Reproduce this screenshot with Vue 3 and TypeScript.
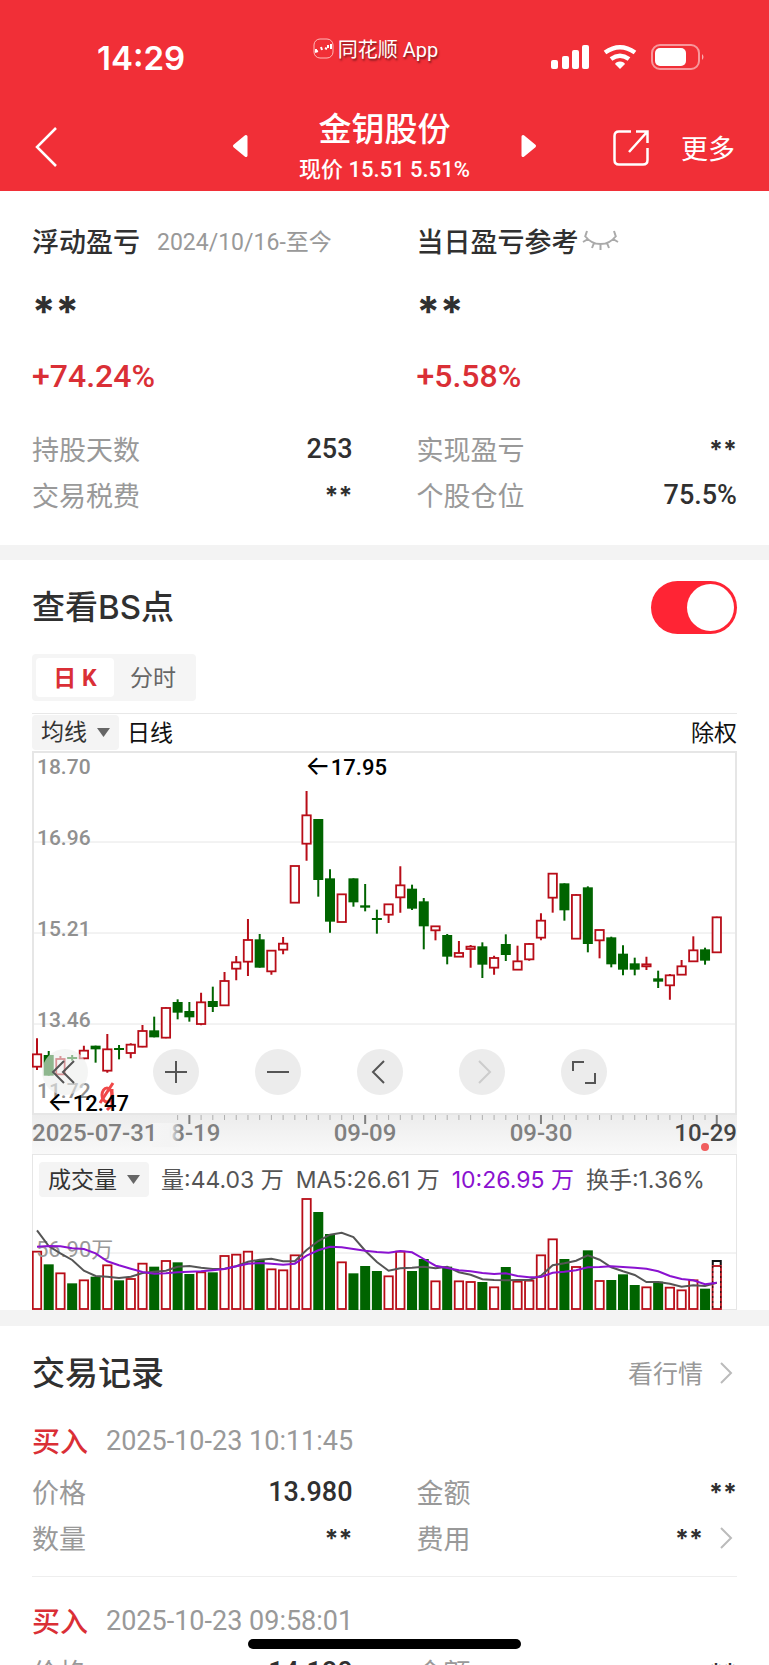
<script setup lang="ts">
import { computed, ref } from 'vue'

type Kind = 'r' | 'g'
type Candle = [Kind, number, number, number, number]

interface Field {
  label: string
  value: string
  masked?: boolean
  more?: boolean
}

interface Trade {
  side: string
  time: string
  fields: Field[]
}

const showPoints = ref(true)
const period = ref('day')

const leftStats: Field[] = [
  { label: '持股天数', value: '253' },
  { label: '交易税费', value: '**', masked: true },
]
const rightStats: Field[] = [
  { label: '实现盈亏', value: '**', masked: true },
  { label: '个股仓位', value: '75.5%' },
]

const trades: Trade[] = [
  {
    side: '买入',
    time: '2025-10-23 10:11:45',
    fields: [
      { label: '价格', value: '13.980' },
      { label: '金额', value: '**', masked: true },
      { label: '数量', value: '**', masked: true },
      { label: '费用', value: '**', masked: true, more: true },
    ],
  },
  {
    side: '买入',
    time: '2025-10-23 09:58:01',
    fields: [
      { label: '价格', value: '14.180' },
      { label: '金额', value: '**', masked: true },
      { label: '数量', value: '**', masked: true },
      { label: '费用', value: '**', masked: true, more: true },
    ],
  },
]

/* kind, high, body top, body bottom, low; depth below the panel top in thirds of a unit */
const candles: Candle[] = [
  ['r', 895, 943, 980, 990], ['g', 933, 945, 1007, 1007], ['r', 948, 957, 1003, 1003], ['g', 945, 951, 957, 962],
  ['r', 917, 932, 955, 958], ['g', 917, 917, 928, 968], ['r', 882, 928, 992, 998], ['g', 915, 924, 930, 958],
  ['r', 910, 914, 939, 955], ['r', 855, 873, 920, 922], ['g', 830, 871, 892, 892], ['r', 802, 804, 893, 895],
  ['g', 778, 786, 818, 838], ['g', 786, 813, 832, 845], ['r', 758, 787, 852, 856], ['g', 740, 783, 801, 816],
  ['r', 696, 723, 796, 796], ['r', 648, 667, 686, 721], ['r', 537, 600, 665, 708], ['g', 582, 598, 683, 683],
  ['r', 630, 632, 694, 704], ['r', 591, 611, 629, 643], ['r', 378, 378, 488, 488], ['r', 153, 226, 311, 362],
  ['g', 237, 237, 420, 470], ['g', 388, 415, 545, 578], ['r', 463, 463, 546, 546], ['g', 415, 415, 487, 500],
  ['g', 432, 496, 503, 514], ['g', 509, 534, 540, 581], ['r', 493, 493, 524, 549], ['r', 379, 436, 472, 518],
  ['g', 434, 446, 506, 510], ['g', 474, 484, 559, 628], ['r', 559, 559, 571, 601], ['g', 582, 585, 650, 673],
  ['r', 603, 639, 650, 650], ['r', 615, 620, 627, 683], ['g', 607, 619, 674, 714], ['r', 647, 654, 683, 704],
  ['g', 583, 612, 645, 663], ['r', 617, 664, 689, 689], ['r', 609, 612, 658, 662], ['r', 520, 542, 593, 601],
  ['r', 401, 401, 473, 518], ['g', 430, 430, 511, 542], ['r', 463, 465, 596, 597], ['g', 439, 442, 612, 637],
  ['r', 570, 570, 601, 655], ['g', 590, 592, 673, 682], ['g', 616, 641, 689, 706], ['g', 653, 670, 689, 706],
  ['r', 650, 673, 679, 690], ['g', 692, 715, 725, 744], ['r', 702, 706, 736, 779], ['r', 660, 679, 704, 704],
  ['r', 589, 631, 664, 664], ['g', 623, 628, 662, 674], ['r', 530, 532, 637, 637],
]

const volumeTops = [
  425, 463, 490, 520, 511, 500, 466, 511, 507, 461, 470, 453, 457, 492, 487, 487, 438, 434, 425, 450,
  478, 481, 436, 267, 306, 372, 457, 490, 468, 483, 499, 425, 483, 447, 514, 470, 514, 516, 516, 532,
  471, 515, 512, 436, 388, 447, 471, 421, 513, 510, 493, 525, 532, 515, 533, 541, 511, 536, 468,
]
const ma5 = [
  361, 408, 430, 450, 482, 498, 500, 504, 500, 489, 485, 482, 470, 468, 473, 477, 476, 469, 455, 449,
  446, 454, 454, 420, 393, 374, 368, 381, 422, 456, 482, 475, 473, 470, 475, 470, 487, 494, 508, 510,
  511, 510, 510, 497, 466, 460, 452, 436, 449, 472, 484, 495, 516, 516, 521, 530, 526, 528, 518,
]
const ma10 = [
  410, 408, 409, 415, 417, 430, 454, 466, 476, 486, 491, 490, 487, 485, 484, 481, 477, 469, 461, 459,
  461, 464, 461, 437, 421, 410, 412, 417, 422, 426, 428, 423, 427, 447, 467, 474, 481, 484, 489, 492,
  490, 498, 502, 501, 488, 485, 481, 472, 471, 469, 471, 473, 476, 484, 498, 507, 511, 523, 518,
]

const PRICE_TOP = 11
const VOLUME_TOP = 88
const VOLUME_FLOOR = 111
const xAt = (i: number): number => 5 + i * 11.72
const priceY = (v: number): number => v / 3 - PRICE_TOP
const volumeY = (v: number): number => v / 3 - VOLUME_TOP

const bars = computed(() =>
  candles.map(([kind, high, top, bottom, low], i) => ({
    kind,
    x: xAt(i),
    high: priceY(high),
    top: priceY(top),
    bottom: priceY(bottom),
    low: priceY(low),
    volume: volumeY(volumeTops[i]),
    last: i === candles.length - 1,
  })),
)

const linePoints = (values: number[]): string =>
  values.map((v, i) => `${xAt(i).toFixed(1)},${volumeY(v).toFixed(1)}`).join(' ')

const majorTicks = [13, 28, 43, 58]
const ticks = candles.map((_, i) => i).filter((i) => i > 11)

const priceLabels = [
  { text: '18.70', y: 23 },
  { text: '16.96', y: 94 },
  { text: '15.21', y: 185 },
  { text: '13.46', y: 276 },
  { text: '11.72', y: 347 },
]
const gridLines = [91, 182, 273]
</script>

<template>
  <div class="page">
    <header class="top">
      <div class="status">
        <span class="clock">14:29</span>
        <span class="brand">
          <svg width="21" height="21" viewBox="0 0 21 21" aria-hidden="true">
            <rect x="1" y="1" width="19" height="19" rx="6" fill="none" stroke="#ffb9b9" stroke-width="1" />
            <path d="M2 14l3-1M3 11v2M8 9l1 3M12 10l2 1M15 7v3M18 6v5" fill="none" stroke="#fff" stroke-width="2" />
          </svg>
          同花顺 App
        </span>
        <span class="signals">
          <svg width="154" height="28" viewBox="0 0 154 28" aria-hidden="true">
            <g fill="#fff">
              <rect x="1" y="17" width="7" height="9" rx="2" />
              <rect x="12" y="13" width="7" height="13" rx="2" />
              <rect x="22" y="7" width="7" height="19" rx="2" />
              <rect x="32" y="2" width="7" height="24" rx="2" />
              <path d="M70 18.500q4 0 5 2.500l-5 5-5-5q1-2.500 5-2.500z" />
              <rect x="105" y="5" width="31" height="18" rx="5" />
            </g>
            <path d="M55 9.500q15-10.500 30 0" fill="none" stroke="#fff" stroke-width="4.500" />
            <path d="M61 16q9-6.500 18 0" fill="none" stroke="#fff" stroke-width="4.500" />
            <rect x="102" y="2" width="47" height="24" rx="8" fill="none" stroke="#fff" stroke-opacity=".5" stroke-width="2" />
            <path d="M152 11q3 3 0 6z" fill="#fff" fill-opacity=".6" />
          </svg>
        </span>
      </div>

      <nav class="nav">
        <button class="plain back" aria-label="返回">
          <svg width="24" height="42" viewBox="0 0 24 42"><path d="M22 2L3 21l19 19" fill="none" stroke="#fff" stroke-width="2.500" /></svg>
        </button>
        <div class="stock">
          <button class="plain" aria-label="上一只">
            <svg width="17" height="24" viewBox="0 0 17 24"><path d="M14 2.500L2.500 12 14 21.500z" fill="#fff" stroke="#fff" stroke-width="3" stroke-linejoin="round" /></svg>
          </button>
          <div class="names">
            <h1>金钥股份</h1>
            <p>现价 15.51 5.51%</p>
          </div>
          <button class="plain" aria-label="下一只">
            <svg width="17" height="24" viewBox="0 0 17 24"><path d="M3 2.500L14.500 12 3 21.500z" fill="#fff" stroke="#fff" stroke-width="3" stroke-linejoin="round" /></svg>
          </button>
        </div>
        <div class="actions">
          <button class="plain" aria-label="分享">
            <svg width="38" height="38" viewBox="0 0 38 38" fill="none" stroke="#fff" stroke-width="2.500">
              <path d="M19 2.500H7q-4.500 0-4.500 4.500v24q0 4.500 4.500 4.500h24q4.500 0 4.500-4.500V19" />
              <path d="M24 2.500h11.500V14M35 3L17 23" />
            </svg>
          </button>
          <button class="plain more">更多</button>
        </div>
      </nav>
    </header>

    <section class="summary two">
      <div>
        <h2>浮动盈亏 <small>2024/10/16-至今</small></h2>
        <p class="amount">**</p>
        <p class="rate">+74.24%</p>
        <dl>
          <div v-for="f in leftStats" :key="f.label" class="field">
            <dt>{{ f.label }}</dt>
            <dd :class="{ masked: f.masked }">{{ f.value }}</dd>
          </div>
        </dl>
      </div>
      <div>
        <h2>
          当日盈亏参考
          <button class="plain eye" aria-label="显示金额">
            <svg width="37" height="20" viewBox="0 0 37 20" fill="none" stroke="#aaa" stroke-width="2">
              <path d="M3 6q6 8 15.500 8T34 6M6 9L1 12M31 9l5 3M12 13l-2 5M25 13l2 5M18.500 14v6M3 7L5 1M34 7l-2-6" />
            </svg>
          </button>
        </h2>
        <p class="amount">**</p>
        <p class="rate">+5.58%</p>
        <dl>
          <div v-for="f in rightStats" :key="f.label" class="field">
            <dt>{{ f.label }}</dt>
            <dd :class="{ masked: f.masked }">{{ f.value }}</dd>
          </div>
        </dl>
      </div>
    </section>

    <section class="chart">
      <div class="bar">
        <label for="points" class="heading">查看BS点</label>
        <input id="points" v-model="showPoints" type="checkbox" role="switch" class="switch" />
      </div>

      <div class="segments">
        <button :class="{ on: period === 'day' }" @click="period = 'day'">日 K</button>
        <button :class="{ on: period === 'minute' }" @click="period = 'minute'">分时</button>
      </div>

      <div class="legend">
        <span class="pick">
          <select aria-label="指标"><option>均线</option></select>
          <svg width="13" height="10" viewBox="0 0 13 10" aria-hidden="true"><path d="M0 0h13L6.500 9z" fill="#666" /></svg>
        </span>
        <span class="word">日线</span>
        <span class="word end">除权</span>
      </div>

      <div class="price">
        <svg class="plot" viewBox="0 0 705 403" role="img" aria-label="日K线">
          <defs>
            <linearGradient id="axis" x1="0" y1="0" x2="0" y2="1">
              <stop offset="0" stop-color="#ececec" />
              <stop offset="1" stop-color="#f9f9f9" />
            </linearGradient>
            <linearGradient id="fade" x1="0" y1="0" x2="1" y2="0">
              <stop offset="0" stop-color="#f5f5f5" />
              <stop offset=".6" stop-color="#f4f4f4" />
              <stop offset="1" stop-color="#f4f4f4" stop-opacity="0" />
            </linearGradient>
          </defs>
          <rect x="0" y="363" width="705" height="40" fill="url(#axis)" />
          <rect x="1" y="1" width="703" height="362" fill="#fff" stroke="#e6e6e6" stroke-width="2" />
          <line v-for="y in gridLines" :key="y" x1="0" x2="705" :y1="y" :y2="y" stroke="#e6e6e6" />
          <g class="scale">
            <text v-for="l in priceLabels" :key="l.text" x="5" :y="l.y">{{ l.text }}</text>
          </g>
          <g v-if="showPoints" fill="none" stroke="#f04848" stroke-width="3">
            <ellipse cx="75" cy="344" rx="5" ry="7" />
            <path d="M68 352L81 332M80 338v16l-5 5" />
          </g>
          <g v-for="(b, i) in bars" :key="i">
            <template v-if="b.kind === 'r'">
              <path :d="`M${b.x} ${b.high}V${b.top}M${b.x} ${b.bottom}V${b.low}`" stroke="#b80d18" stroke-width="2" />
              <rect :x="b.x - 4.200" :y="b.top" width="8.400" :height="b.bottom - b.top" fill="#fff" stroke="#b80d18" stroke-width="1.800" />
            </template>
            <template v-else>
              <path :d="`M${b.x} ${b.high}V${b.low}`" stroke="#006400" stroke-width="2" />
              <rect :x="b.x - 5" :y="b.top" width="10" :height="b.bottom - b.top" fill="#006400" />
            </template>
          </g>
          <g class="mark">
            <text x="273" y="24"><tspan class="arrow">←</tspan>17.95</text>
            <text x="15" y="360"><tspan class="arrow">←</tspan>12.47</text>
          </g>
          <line
            v-for="i in ticks"
            :key="i"
            :x1="xAt(i)"
            :x2="xAt(i)"
            y1="364"
            :y2="majorTicks.includes(i) ? 373 : 369"
            :stroke="majorTicks.includes(i) ? '#808080' : '#b0b0b0'"
            :stroke-width="majorTicks.includes(i) ? 2 : 1"
          />
          <g class="dates">
            <text x="157" y="390" text-anchor="middle">08-19</text>
            <rect x="120" y="372" width="29" height="24" fill="url(#fade)" />
            <text x="0" y="390">2025-07-31</text>
            <text x="333" y="390" text-anchor="middle">09-09</text>
            <text x="509" y="390" text-anchor="middle">09-30</text>
            <text x="705" y="390" text-anchor="end" class="today">10-29</text>
          </g>
          <circle cx="673" cy="396" r="4" fill="#f05c5c" />
        </svg>
        <div class="tools">
          <button aria-label="最早" class="first"><svg viewBox="0 0 46 46"><path d="M22 12L11 23l11 11M32 12L21 23l11 11" /></svg></button>
          <button aria-label="放大"><svg viewBox="0 0 46 46"><path d="M12 23h22M23 12v22" /></svg></button>
          <button aria-label="缩小"><svg viewBox="0 0 46 46"><path d="M12 23h22" /></svg></button>
          <button aria-label="向左"><svg viewBox="0 0 46 46"><path d="M27 12L16 23l11 11" /></svg></button>
          <button aria-label="向右" disabled><svg viewBox="0 0 46 46"><path d="M20 12l11 11-11 11" /></svg></button>
          <button aria-label="全屏"><svg viewBox="0 0 46 46"><path d="M12 22V13h11M24 34h10V24" /></svg></button>
        </div>
      </div>

      <div class="volume">
        <div class="figures">
          <span class="pick">
            <select aria-label="副图"><option>成交量</option></select>
            <svg width="13" height="10" viewBox="0 0 13 10" aria-hidden="true"><path d="M0 0h13L6.500 9z" fill="#666" /></svg>
          </span>
          <span class="word">量:44.03 万</span>
          <span class="word">MA5:26.61 万</span>
          <span class="word violet">10:26.95 万</span>
          <span class="word">换手:1.36%</span>
        </div>
        <svg class="plot" viewBox="0 0 705 112" role="img" aria-label="成交量">
          <line x1="0" x2="705" y1="55" y2="55" stroke="#e6e6e6" />
          <g v-for="(b, i) in bars" :key="i">
            <rect
              v-if="b.kind === 'r'"
              :x="b.x - 4.200"
              :y="b.volume"
              width="8.400"
              :height="VOLUME_FLOOR - b.volume"
              fill="#fff"
              stroke="#b80d18"
              stroke-width="1.800"
            />
            <rect v-else :x="b.x - 5" :y="b.volume" width="10" :height="VOLUME_FLOOR + 1 - b.volume" fill="#006400" />
            <template v-if="b.last">
              <path :d="`M${b.x - 4} ${b.volume - 1}v-4h8v4`" fill="none" stroke="#111" stroke-width="2" />
              <path :d="`M${b.x - 4} ${b.volume}V111M${b.x + 4} ${b.volume}V111`" stroke="#111" stroke-width="1" stroke-dasharray="2 3" />
            </template>
          </g>
          <text x="4" y="59" class="peak">56.90万</text>
          <polyline :points="linePoints(ma5)" fill="none" stroke="#555" stroke-width="2" />
          <polyline :points="linePoints(ma10)" fill="none" stroke="#8a12d0" stroke-width="2" />
        </svg>
      </div>
    </section>

    <section class="records">
      <div class="bar">
        <h2 class="heading">交易记录</h2>
        <a href="#" class="quote">
          <span class="word">看行情</span>
          <svg width="14" height="24" viewBox="0 0 14 24"><path d="M2 2l10 10L2 22" fill="none" stroke="#bbb" stroke-width="2" /></svg>
        </a>
      </div>
      <article v-for="t in trades" :key="t.time">
        <p class="deal"><strong>{{ t.side }}</strong><time>{{ t.time }}</time></p>
        <dl class="two">
          <div v-for="f in t.fields" :key="f.label" class="field">
            <dt>{{ f.label }}</dt>
            <dd :class="{ masked: f.masked }">{{ f.value }}</dd>
            <svg v-if="f.more" class="go" width="14" height="24" viewBox="0 0 14 24"><path d="M2 2l10 10L2 22" fill="none" stroke="#bbb" stroke-width="2" /></svg>
          </div>
        </dl>
      </article>
    </section>

    <div class="home"></div>
  </div>
</template>

<style>
body {
  margin: 0;
  background: #fff;
}
</style>

<style scoped>
.page {
  height: 100vh;
  overflow: hidden;
  background: #fff;
  color: #303030;
  font-family: Roboto, "Noto Sans CJK SC", sans-serif;
  font-size: 27px;
}
h1, h2, p, dl, dd {
  margin: 0;
}
svg {
  display: block;
}
button, select, input {
  font: inherit;
  color: inherit;
  margin: 0;
  border: 0;
}
.plain {
  padding: 0;
  background: none;
}

/* header */
.top {
  height: 191px;
  background: #f12f37;
  color: #fff;
}
.status {
  display: grid;
  grid-template-columns: 1fr auto 1fr;
  height: 100px;
}
.clock {
  padding: 38px 0 0 97px;
  font: 600 33px/40px Inter, sans-serif;
}
.brand {
  display: flex;
  gap: 4px;
  align-items: center;
  height: 28px;
  margin-top: 34px;
  padding-right: 18px;
  font-size: 20px;
  text-shadow: 1px 2px 2px #7c1a1e;
}
.signals {
  justify-self: end;
  margin: 43px 65px 0 0;
}
.nav {
  display: grid;
  grid-template-columns: 1fr auto 1fr;
  height: 91px;
}
.back {
  justify-self: start;
  height: 42px;
  margin: 26px 0 0 34px;
}
.stock {
  display: flex;
  gap: 50px;
  align-items: center;
}
.names {
  text-align: center;
  white-space: nowrap;
}
h1 {
  font-size: 33px;
  line-height: 48px;
  font-weight: 500;
}
.names p {
  font-size: 22px;
  line-height: 32px;
  font-weight: 500;
}
.actions {
  display: flex;
  gap: 31px;
  justify-content: flex-end;
  align-items: center;
  padding: 4px 34px 0 0;
}
.more {
  font-size: 27px;
}

/* shared rows */
.two {
  display: grid;
  grid-template-columns: 1fr 1fr;
  column-gap: 64px;
}
.field {
  display: flex;
  align-items: center;
  height: 46px;
}
dt {
  flex: 1;
  padding-bottom: 2px;
  color: #999;
}
dd {
  font-size: 27px;
  font-weight: 500;
}
.masked, .amount {
  font-family: Inter, sans-serif;
  font-weight: 700;
}
.masked {
  padding-top: 2px;
  font-size: 25px;
}
.word {
  padding-bottom: 3px;
}
.go {
  margin: 0 4px 0 16px;
}

/* profit summary */
.summary {
  padding: 29px 32px 27px;
  border-bottom: 15px solid #f3f3f3;
}
.summary h2 {
  display: flex;
  align-items: center;
  height: 40px;
  font-size: 27px;
  font-weight: 500;
  white-space: nowrap;
}
.summary small {
  margin-left: 17px;
  color: #999;
  font-size: 23px;
  font-weight: 400;
}
.eye {
  margin-left: 3px;
}
.amount {
  height: 88px;
  font-size: 42px;
  line-height: 104px;
}
.rate {
  margin-bottom: 22px;
  color: #da2f36;
  font-size: 32px;
  font-weight: 500;
  line-height: 56px;
}

/* chart */
.chart {
  padding: 0 32px;
  border-bottom: 16px solid #f3f3f3;
}
.bar {
  display: flex;
  justify-content: space-between;
  align-items: center;
  height: 94px;
}
.heading {
  padding-bottom: 4px;
  font-family: Inter, "Noto Sans CJK SC", sans-serif;
  font-size: 33px;
  font-weight: 500;
}
.switch {
  appearance: none;
  box-sizing: border-box;
  width: 86px;
  height: 53px;
  padding: 3px;
  border-radius: 27px;
  background: #ccc;
}
.switch::before {
  content: "";
  display: block;
  width: 47px;
  height: 47px;
  border-radius: 50%;
  background: #fff;
}
.switch:checked {
  background: #ff2434;
}
.switch:checked::before {
  margin-left: auto;
}
.segments {
  display: inline-flex;
  box-sizing: border-box;
  height: 47px;
  padding: 4px;
  border-radius: 4px;
  background: #f5f5f5;
  vertical-align: top;
}
.segments button {
  width: 78px;
  padding: 0 0 4px;
  border-radius: 4px;
  background: none;
  color: #666;
  font-size: 23px;
}
.segments .on {
  background: #fff;
  color: #da2f36;
  font-weight: 700;
}
.legend {
  display: flex;
  gap: 8px;
  align-items: center;
  height: 37px;
  margin-top: 12px;
  border-top: 1px solid #e8e8e8;
  color: #111;
  font-size: 23px;
}
.end {
  margin-left: auto;
}
.pick {
  display: flex;
  gap: 10px;
  align-items: center;
  height: 35px;
  padding: 0 9px;
  border-radius: 4px;
  background: #f4f4f4;
  color: #333;
}
.pick select {
  appearance: none;
  padding: 0;
  background: none;
}
.price {
  position: relative;
}
.plot {
  width: 100%;
  height: auto;
}
.scale text {
  fill: #909090;
  font-size: 21px;
  font-weight: 500;
}
.mark text {
  fill: #000;
  font-size: 22px;
  font-weight: 500;
}
.mark .arrow {
  font-family: Inter, sans-serif;
  font-size: 27px;
  font-weight: 400;
}
.dates text {
  fill: #808080;
  font-size: 24px;
  font-weight: 500;
}
.dates .today {
  fill: #444;
}
.tools {
  position: absolute;
  left: 10px;
  bottom: 59px;
  display: flex;
  gap: 56px;
}
.tools button {
  width: 46px;
  height: 46px;
  padding: 0;
  border-radius: 50%;
  background: #ececec;
}
.tools .first {
  margin-right: 9px;
  background: rgb(236 238 236 / 60%);
}
.tools path {
  fill: none;
  stroke: #555;
  stroke-width: 2;
}
.tools button:disabled path {
  stroke: #ccc;
}
.volume {
  box-shadow: inset 0 0 0 1px #e6e6e6;
}
.figures {
  display: flex;
  gap: 12px;
  align-items: center;
  height: 35px;
  padding: 8px 0 1px 7px;
  color: #555;
  font-family: Inter, "Noto Sans CJK SC", sans-serif;
  font-size: 23px;
  white-space: nowrap;
}
.violet {
  color: #8a12d0;
}
.peak {
  fill: #999;
  font-size: 22px;
}

/* trade records */
.records {
  padding: 0 32px;
}
.quote {
  display: flex;
  gap: 16px;
  align-items: center;
  padding-right: 4px;
  color: #999;
  font-size: 25px;
  text-decoration: none;
}
article {
  padding-bottom: 15px;
}
article + article {
  padding-top: 23px;
  border-top: 1px solid #eee;
}
.deal {
  display: flex;
  gap: 18px;
  align-items: center;
  height: 42px;
  margin-bottom: 7px;
}
.deal strong {
  padding-bottom: 3px;
  color: #da2f36;
  font-size: 28px;
  font-weight: 500;
}
.deal time {
  color: #999;
}
.home {
  position: fixed;
  left: 50%;
  bottom: 16px;
  width: 273px;
  height: 10px;
  margin-left: -137px;
  border-radius: 5px;
  background: #000;
}
</style>
